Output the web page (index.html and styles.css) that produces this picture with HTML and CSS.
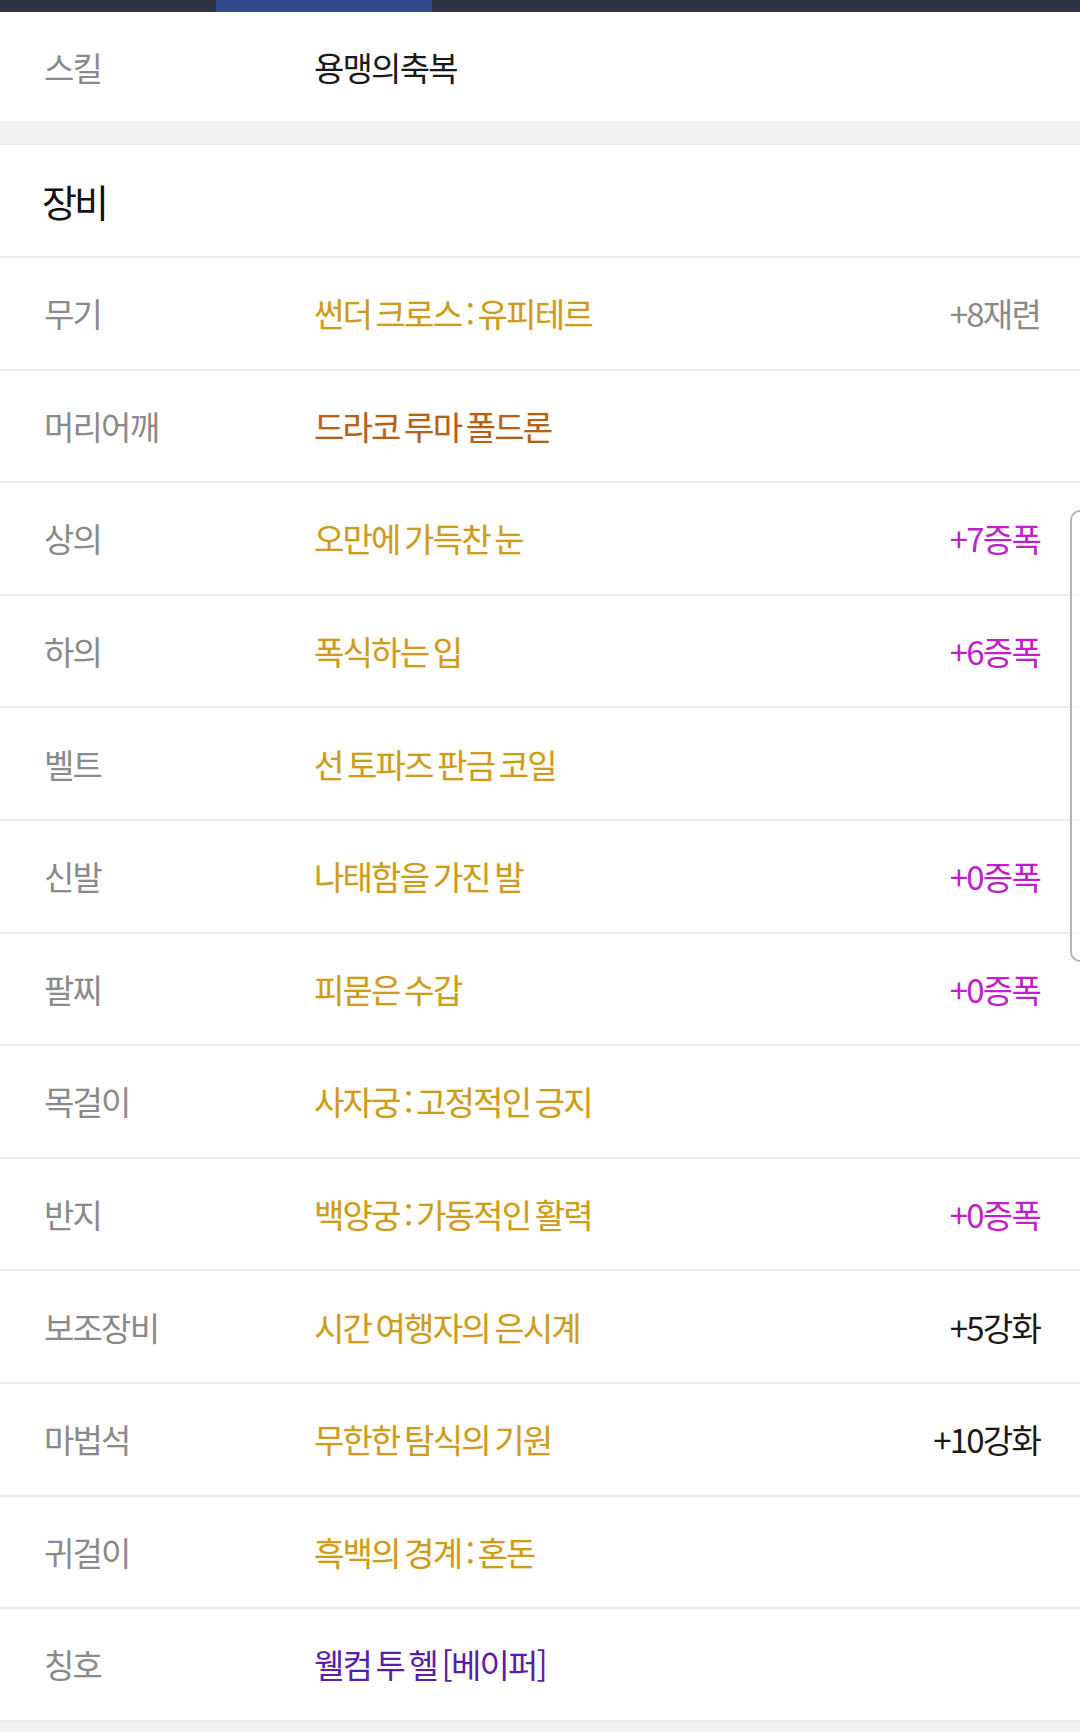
FILE: index.html
```html
<!DOCTYPE html>
<html lang="ko">
<head>
    <meta charset="UTF-8">
    <meta name="viewport" content="width=device-width, initial-scale=1.0">
    <title>캐릭터 장비</title>
    <link rel="stylesheet" href="styles.css">
</head>
<body>
<!-- tab indicator -->
<div class="tabbar">
    <span></span>
    <span class="on"></span>
    <span></span>
    <span></span>
    <span></span>
</div>

<div class="row skill-row">
    <span class="label">스킬</span>
    <span class="value">용맹의축복</span>
</div>

<div class="gap"></div>

<div class="section-title">장비</div>

<ul class="equip-list">
    <li class="row">
        <span class="label">무기</span>
        <span class="value epic">썬더 크로스 : 유피테르</span>
        <span class="tag refine">+8재련</span>
    </li>
    <li class="row">
        <span class="label">머리어깨</span>
        <span class="value legend">드라코 루마 폴드론</span>
    </li>
    <li class="row">
        <span class="label">상의</span>
        <span class="value epic">오만에 가득찬 눈</span>
        <span class="tag amp">+7증폭</span>
    </li>
    <li class="row">
        <span class="label">하의</span>
        <span class="value epic">폭식하는 입</span>
        <span class="tag amp">+6증폭</span>
    </li>
    <li class="row">
        <span class="label">벨트</span>
        <span class="value epic">선 토파즈 판금 코일</span>
    </li>
    <li class="row">
        <span class="label">신발</span>
        <span class="value epic">나태함을 가진 발</span>
        <span class="tag amp">+0증폭</span>
    </li>
    <li class="row">
        <span class="label">팔찌</span>
        <span class="value epic">피묻은 수갑</span>
        <span class="tag amp">+0증폭</span>
    </li>
    <li class="row">
        <span class="label">목걸이</span>
        <span class="value epic">사자궁 : 고정적인 긍지</span>
    </li>
    <li class="row">
        <span class="label">반지</span>
        <span class="value epic">백양궁 : 가동적인 활력</span>
        <span class="tag amp">+0증폭</span>
    </li>
    <li class="row">
        <span class="label">보조장비</span>
        <span class="value epic">시간 여행자의 은시계</span>
        <span class="tag">+5강화</span>
    </li>
    <li class="row">
        <span class="label">마법석</span>
        <span class="value epic">무한한 탐식의 기원</span>
        <span class="tag">+10강화</span>
    </li>
    <li class="row">
        <span class="label">귀걸이</span>
        <span class="value epic">흑백의 경계 : 혼돈</span>
    </li>
    <li class="row">
        <span class="label">칭호</span>
        <span class="value rare">웰컴 투 헬 [베이퍼]</span>
    </li>
</ul>

<!-- fast scroll handle over the right edge -->
<div class="scroll-handle"></div>
</body>
</html>
```

FILE: styles.css
```css
body {
    margin: 0;
    background-color: #f1f1f1;
    font-family: "Noto Sans CJK KR", "Noto Sans", sans-serif;
    position: relative;
}
.tabbar {
    display: flex;
    height: 12px;
    background-color: #2d3340;
}
.tabbar span {
    flex: 1;
}
.tabbar .on {
    background-color: #2f4b8b;
}
.row {
    display: flex;
    align-items: center;
    box-sizing: border-box;
    height: 112.6px;
    padding: 0 40px 0 44px;
    background-color: #fff;
    border-bottom: 2px solid #ececec;
    font-size: 33px;
    letter-spacing: -1.8px;
    word-spacing: -3px;
}
.skill-row {
    height: 110px;
    border-bottom: none;
}
.label {
    width: 270px;
    flex-shrink: 0;
    color: #8a8a8a;
}
.value {
    flex: 1;
    color: #1a1a1a;
}
.gap {
    height: 23px;
    background-color: #f1f1f1;
    border-top: 1px solid #e9e9e9;
    border-bottom: 1px solid #e9e9e9;
    box-sizing: border-box;
}
.section-title {
    box-sizing: border-box;
    height: 113px;
    display: flex;
    align-items: center;
    padding-left: 42px;
    background-color: #fff;
    border-bottom: 2px solid #ececec;
    font-size: 38px;
    letter-spacing: -3px;
    color: #111;
}
.equip-list {
    list-style: none;
    margin: 0;
    padding: 0;
}
.epic {
    color: #cc9b22;
    text-shadow: 0 0 2px rgba(255, 220, 120, 0.5);
}
.legend {
    color: #b0611b;
    text-shadow: 0 0 2px rgba(255, 190, 120, 0.5);
}
.rare {
    color: #5a1ea8;
}
.tag {
    color: #1a1a1a;
    white-space: nowrap;
}
.tag.refine {
    color: #8a8a8a;
}
.tag.amp {
    color: #c01fc9;
}
.scroll-handle {
    position: absolute;
    top: 510px;
    left: 1070px;
    width: 20px;
    height: 452px;
    box-sizing: border-box;
    border: 2px solid #b5b5b5;
    border-radius: 10px;
    background-color: rgba(255, 255, 255, 0.6);
}
```
